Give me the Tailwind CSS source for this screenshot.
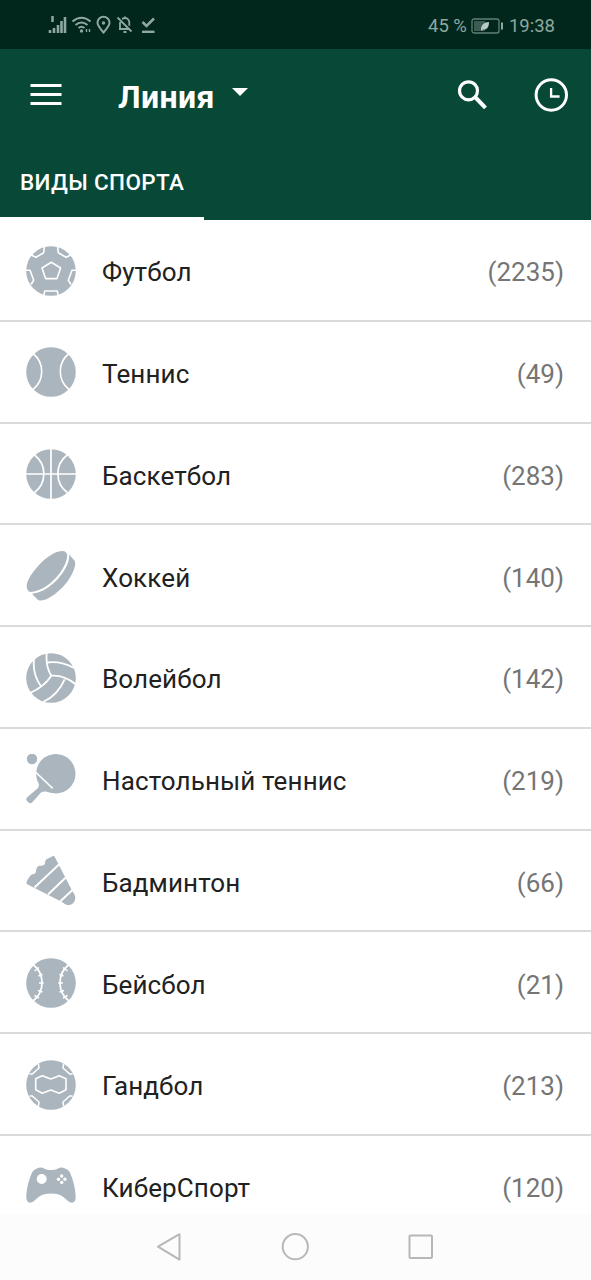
<!DOCTYPE html>
<html lang="ru">
<head>
<meta charset="utf-8">
<title>Линия</title>
<script src="https://cdn.jsdelivr.net/npm/@tailwindcss/browser@4"></script>
</head>
<body class="bg-white">
<div class="flex h-[1280px] w-[591px] flex-col overflow-hidden bg-white font-[Roboto,sans-serif]">
  <div class="flex h-[49px] shrink-0 items-center justify-between bg-[#01261c] pr-[36px] pl-[46px] text-[#8ea8a0]">
    <svg class="h-[30px] w-[114px]" viewBox="46 10 114 30" fill="none" stroke="currentColor" stroke-width="2">
      <path d="M50 30v3M54 28v5M58 25v8M61.500 21v12M65 17v16" stroke-width="2.600"/><path d="M52.500 16v6" stroke-width="2.500"/>
      <path d="M72.500 21.500q9-7.500 18 0M75.500 25q6-5 12 0M78.500 28q3-2.500 6 0" stroke-width="2.100"/><circle cx="81.500" cy="31" r="1.700" fill="currentColor" stroke="none"/><path d="M86.500 29v3M89.500 29v3" stroke-width="1.400"/>
      <path d="M103.500 32.500c-4-4.500-6-7-6-9.700a6 6 0 0 1 12 0c0 2.700-2 5.200-6 9.700z" stroke-width="2"/><circle cx="103.500" cy="23" r="1.700" fill="currentColor" stroke="none"/>
      <path d="M117.500 17.500l14 14M119 29h10M120 28.500v-6.500M122 18.800q6-2.500 7.300 3v4M125 16.500v2M123.500 32h3" stroke-width="1.800"/>
      <path d="M142.500 22l4 4 7.500-7.500" stroke-width="2.600"/><path d="M142 31.800h12.500" stroke-width="2.400"/>
    </svg>
    <div class="mt-[3px] flex items-center text-[18.5px] leading-none">
      <span class="whitespace-pre">45 %</span>
      <svg class="mb-px ml-[4px] h-[16px] w-[33px]" viewBox="0 0 33 16"><rect x="1" y="1" width="27" height="14" rx="2" fill="none" stroke="#5f8076" stroke-width="1.300"/><rect x="3" y="3" width="11" height="10" fill="#3c5b52"/><path d="M10 12c0-5 3-8 8-8 0 5-2 8-6 7.500l-1 1.500z" fill="#b8cbc5"/><path d="M31 4.500v7" stroke="currentColor" stroke-width="2"/></svg>
      <span class="ml-[5px]">19:38</span>
    </div>
  </div>

  <header class="flex h-[171px] shrink-0 flex-col bg-[#074836] text-white">
    <div class="flex h-[92px] items-center pr-[23px] pl-[30px]">
      <svg class="h-[24px] w-[32px]" viewBox="0 0 32 24" stroke="currentColor" stroke-width="3"><path d="M.5 2.500h31M.5 11.500h31M.5 20.500h31"/></svg>
      <h1 class="mt-[4px] ml-[56px] w-[97px] text-[32px] leading-none font-bold tracking-[0.4px] whitespace-nowrap">Линия</h1>
      <svg class="mb-[6px] ml-[17px] h-[8px] w-[16px]" viewBox="0 0 16 8" fill="currentColor"><path d="M0 0h16L8 8z"/></svg>
      <svg class="ml-auto h-[30px] w-[30px]" viewBox="0 0 30 30" fill="none" stroke="currentColor"><circle cx="11.500" cy="10.800" r="9" stroke-width="3.200"/><path d="M18.500 17.500l10 10.300" stroke-width="4"/></svg>
      <svg class="ml-[47px] h-[34px] w-[34px]" viewBox="0 0 34 34" fill="none" stroke="currentColor"><circle cx="17.300" cy="17" r="15.200" stroke-width="3"/><path d="M17.100 10v8.500h8.500" stroke-width="2.300"/></svg>
    </div>
    <div class="flex h-[79px] w-[204px] items-center border-b-[3px] border-white pt-[6px] pl-[20px]">
      <span class="text-[22.500px] leading-none font-medium tracking-[0.35px] whitespace-nowrap">ВИДЫ СПОРТА</span>
    </div>
  </header>

  <main id="list" class="min-h-0 flex-1 overflow-hidden"></main>

  <nav class="flex h-[66px] shrink-0 bg-[#fcfcfc]">
    <svg class="h-[66px] w-full" viewBox="0 0 591 66" fill="none" stroke="#b7b7b7" stroke-width="2" stroke-linejoin="round"><path d="M158 32.700l21.500-12.500v25.500z"/><circle cx="295.300" cy="32.700" r="12.600"/><rect x="409.500" y="21.500" width="22.500" height="22.500" rx="1"/></svg>
  </nav>
</div>

<template id="row">
  <div class="flex h-[101.75px] items-center border-b-2 border-[#dadada] pt-[1.5px] pr-[27px] pl-[26px]">
    <svg class="h-[50px] w-[50px] shrink-0 overflow-hidden text-[#abb5bd]" viewBox="0 0 50 50" fill="currentColor" stroke="none"></svg>
    <span class="name mt-[3.5px] ml-[26px] text-[26px] leading-none tracking-[0.12px] whitespace-nowrap text-[#212121]"></span>
    <span class="count mt-[3.5px] ml-auto text-[26px] leading-none text-[#757575]"></span>
  </div>
</template>
<script>
const ball = '<circle cx="25" cy="25" r="24.800"/>';
const line = (d, w = 1.8) => `<path d="${d}" fill="none" stroke="#fff" stroke-width="${w}" stroke-linejoin="round"/>`;
const sports = [
  ['Футбол', 2235, ball + line('M25.300 16.200L34.600 22 31 32.600H19.600L16 22zM5 7L6.700 9.700 10 11.300 17.700 6.700 18.500 0M31.500 0L32.300 6.700 40 11.300 43.300 9.700 45 7M0 24.300H4L7.700 34.300 5 38.500M50 24.300H46L42.300 34.300 45 38.500M17.700 50L18.700 45H31.300L32.300 50', 1.6)],
  ['Теннис', 49, ball + line('M7 6.500A23 23 0 0 1 7 42.500M43 6.500A23 23 0 0 0 43 42.500', 1.6)],
  ['Баскетбол', 283, ball + line('M25 0V50M0 25H50M8.500 6A23.500 23.500 0 0 1 8.500 43.500M41.200 6A23.500 23.500 0 0 0 41.200 43.500', 1.7)],
  ['Хоккей', 140, '<path d="M4 41C-1.500 38 0 30 8 20C16 9 28 0 36 0C41.500 0 42.500 4 39.500 12C34 25 20 40 4 41zM43 3.500L48.500 9.500C50.500 13 48 21 41.500 30.500C34 40 23 49 15 49.600C13 49.700 12 49 10.500 47.500L6 42.700C22 41 36 26 41.500 13C43 9 43.500 6 43 3.500z"/>'],
  ['Волейбол', 142, ball + line('M20.700 0C20 8 21 16 25.300 22.700C33 22 42 25 50 31.500M25.300 22.700C20 31 13 36 4 40M8 6C7 15 9 25 14.900 33M20.900 9.500C30 8.500 39 10 48 15M38.700 26.300C34 37 28 44 17 49')],
  ['Настольный теннис', 219, '<circle cx="6" cy="5" r="5.200"/><circle cx="29.800" cy="19.800" r="19.700"/><path d="M10.500 23C14 29 13 32 12 34L1.500 43C-.5 45 0 46 2 48C4 50 5.500 49.500 7 47.500L15 38.500C18 37 21 37.500 25 39z"/>' + line('M9.500 18L26.800 34.500', 1.7)],
  ['Бадминтон', 66, '<path d="M26 .5Q27.700-.8 28.800 1L46 34.500L48.500 38.500C51 44 47 49 42.500 49C39 49 37.500 46.500 35 45.500L.7 28Q0 26 2 23L4.500 19.500C5.500 18 7.500 18.500 9 17.500C11 15.500 9.500 12 12 10.500C14 9 17 10.500 18.500 8.500C19.700 6.500 18.500 4.500 21 3z"/>' + line('M8.500 31.500L33.500 8M22 38.500L39.500 21.700M33.500 46L47 33.500', 2)],
  ['Бейсбол', 21, ball + line('M7 6.500A23 23 0 0 1 7 43M43 6.500A23 23 0 0 0 43 43', 1.8) + line('M8.500 13L13 9.500M12.500 18L16.500 16.200M13 25H17.800M12 32.500L16.500 34M8.500 37.500L13 40M41.500 13L37 9.500M37.500 18L33.500 16.200M37 25H32.200M38 32.500L33.500 34M41.500 37.500L37 40', 1.5)],
  ['Гандбол', 213, ball + line('M9.700 18.700L16.300 15.700 24.800 19 33.300 15.700 40 18.700V29.700L33.300 33.200 24.800 30 16.300 33.200 9.700 29.700zM3.500 14H6.300L13 8 12.300 3.500M46.500 14H43.700L37 8 37.700 3.500M3.500 36H6.300L13 42 12.300 46.500M46.500 36H43.700L37 42 37.700 46.500', 1.6)],
  ['КиберСпорт', 120, '<path d="M7 10C11 6.500 15 5.500 18 7.500C22 9.500 28 9.500 32 7.500C35 5.500 39 6.500 43 10C47 17 49.500 28 49.700 36C49.700 42 46 43 42 40C38 37 36 32.500 25 32.500C14 32.500 12 37 8 40C4 43 .3 42 .3 36C.5 28 3 17 7 10z"/><g fill="#fff"><circle cx="15.700" cy="18" r="5"/><circle cx="35.700" cy="15" r="1.700"/><circle cx="35.700" cy="21.400" r="1.700"/><circle cx="32.500" cy="18.200" r="1.700"/><circle cx="38.900" cy="18.200" r="1.700"/></g>'],
];
const list = document.getElementById('list');
for (const [name, count, art] of sports) {
  const row = document.getElementById('row').content.cloneNode(true);
  row.querySelector('svg').innerHTML = art;
  row.querySelector('.name').textContent = name;
  row.querySelector('.count').textContent = `(${count})`;
  list.append(row);
}
</script>
</body>
</html>
